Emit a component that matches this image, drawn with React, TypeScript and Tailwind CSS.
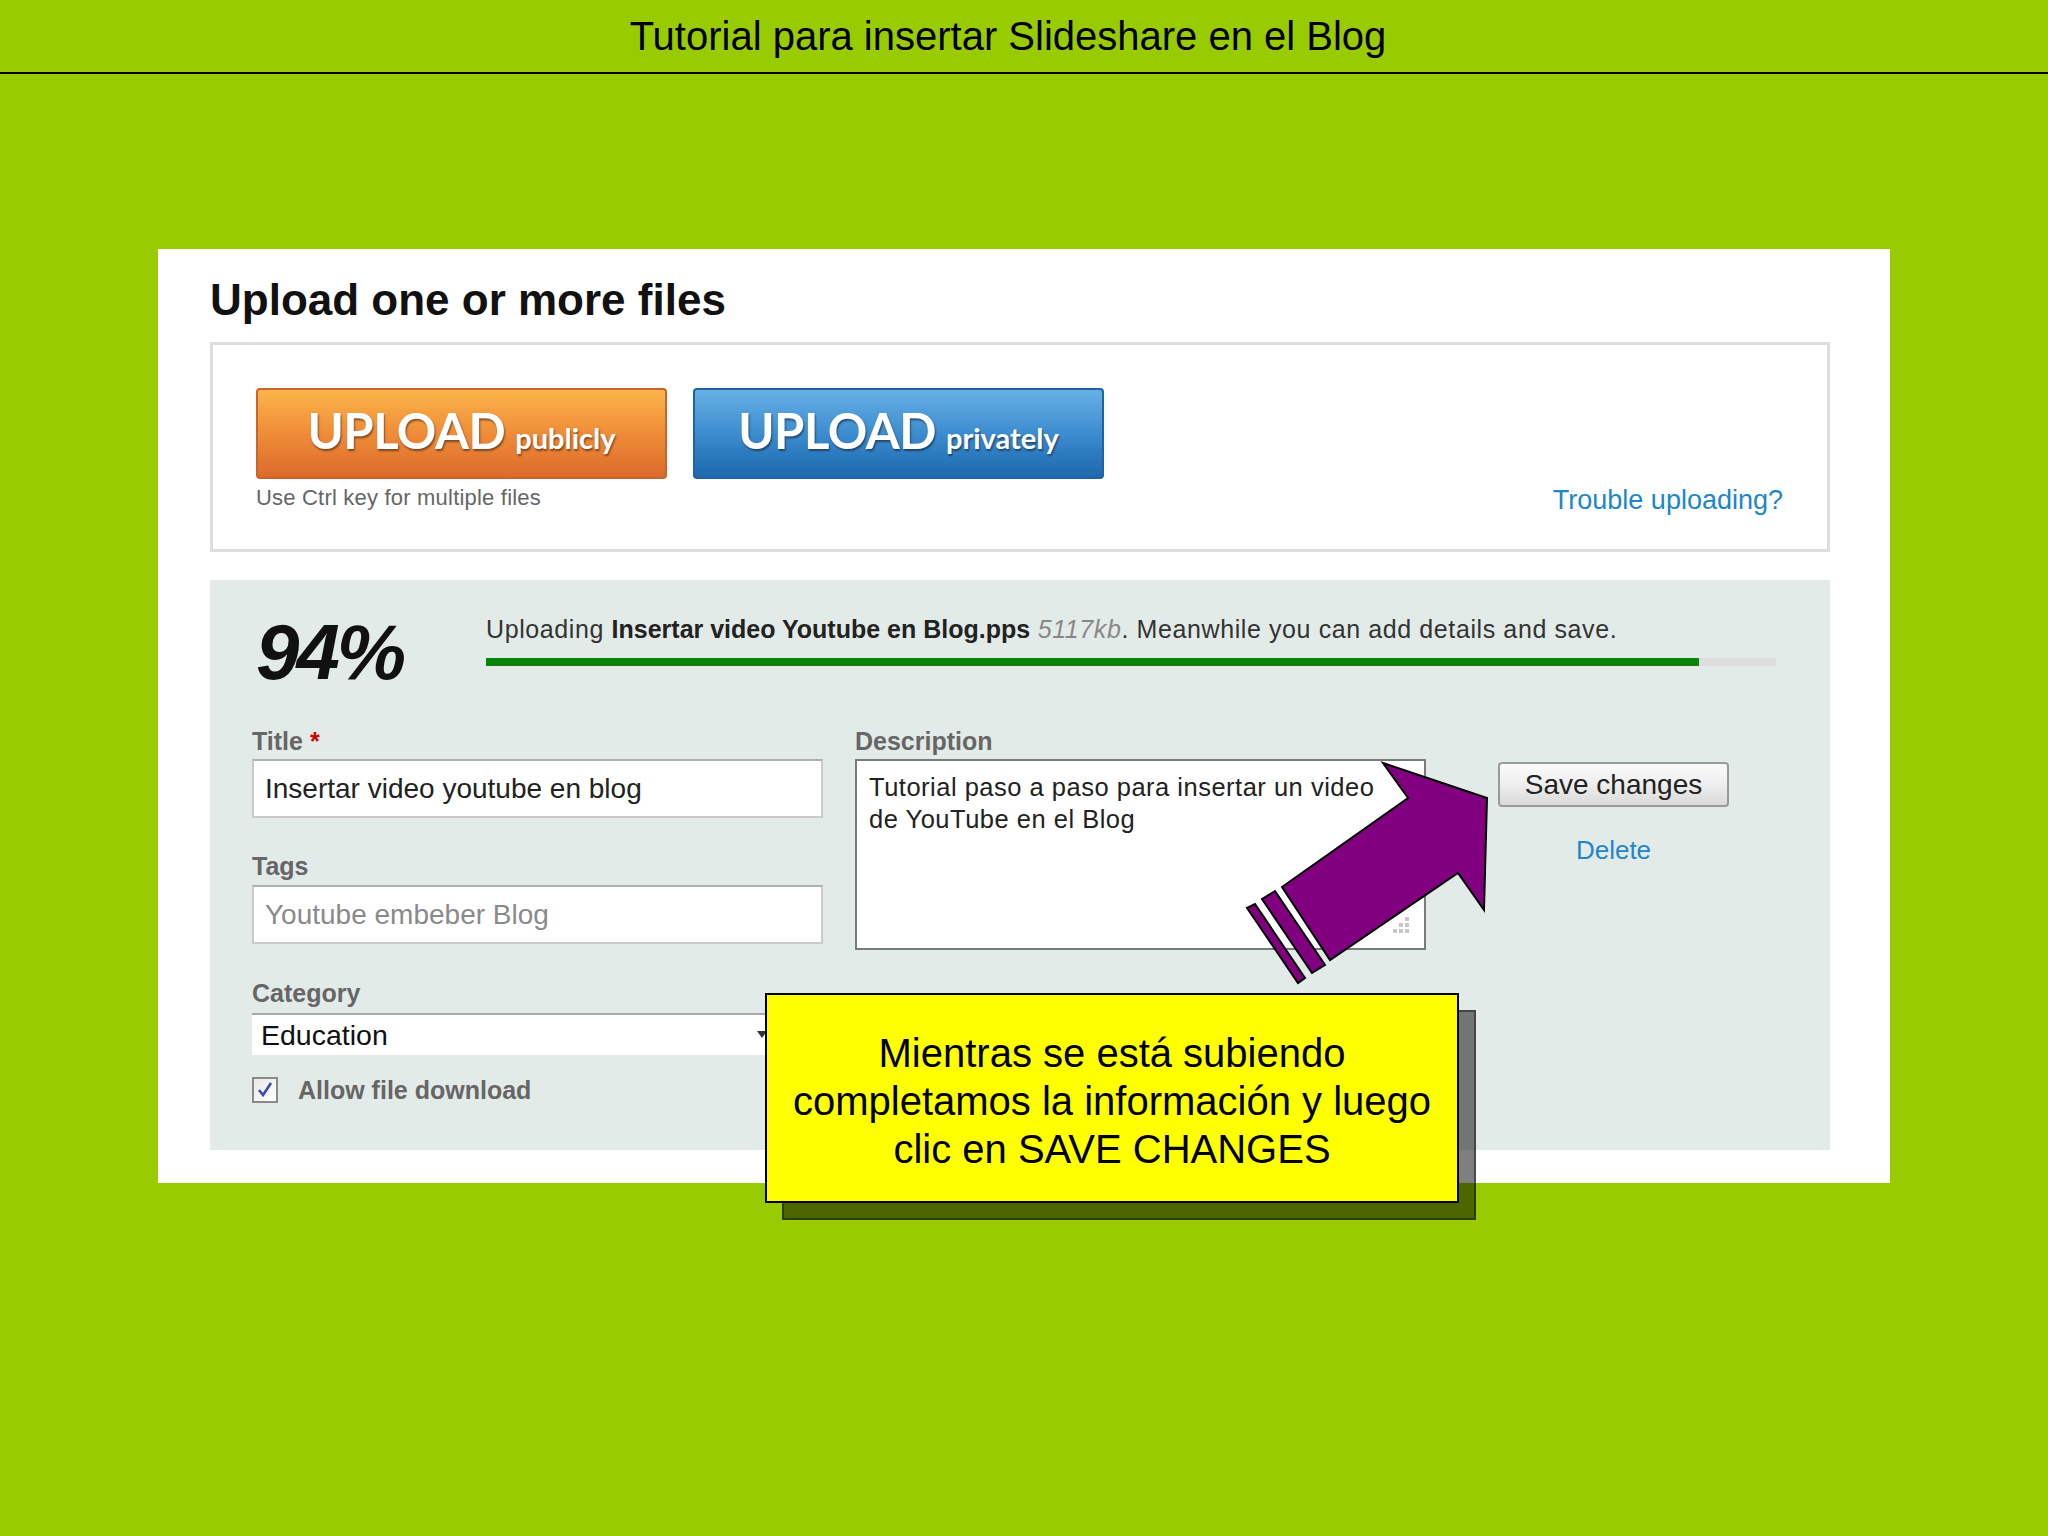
import React from "react";

function UploadButton({ sub, kind }: { sub: string; kind: "orange" | "blue" }) {
  const cls =
    kind === "orange"
      ? "bg-linear-to-b from-[#fbb44a] via-[#ef8c38] to-[#db6a2b] border-[#c7652c]"
      : "bg-linear-to-b from-[#66b0e4] via-[#3c8ccf] to-[#1c69ae] border-[#1e64a4]";
  return (
    <div
      className={`w-[411px] h-[91px] rounded-[4px] border-2 ${cls} flex items-baseline justify-center gap-[10px] pt-[10px] text-white font-['Lato',sans-serif] font-bold [text-shadow:1px_2px_2px_rgba(0,0,0,0.45)]`}
    >
      <span className="text-[49px] leading-[60px] tracking-[-0.5px]">UPLOAD</span>
      <span className="text-[29px] leading-[30px]">{sub}</span>
    </div>
  );
}

export default function App() {
  return (
    <div className="relative w-[2048px] h-[1536px] overflow-hidden bg-[#99cc00] font-['Liberation_Sans',Arial,sans-serif]">
      {/* Header */}
      <div className="h-[74px] border-b-2 border-black flex items-center justify-center pr-[32px] text-[40px] text-black">
        Tutorial para insertar Slideshare en el Blog
      </div>

      {/* White panel */}
      <div className="ml-[158px] mt-[175px] w-[1732px] h-[934px] bg-white pt-[27px] pl-[52px]">
        <div className="text-[44px] font-bold leading-[48px] text-[#111]">Upload one or more files</div>

        {/* Upload box */}
        <div className="mt-[18px] w-[1620px] h-[210px] border-[3px] border-[#dddddd] flex justify-between pl-[43px] pt-[43px] pr-[44px]">
          <div className="flex flex-col">
            <div className="flex gap-[26px]">
              <UploadButton sub="publicly" kind="orange" />
              <UploadButton sub="privately" kind="blue" />
            </div>
            <div className="mt-[7px] text-[22px] leading-[24px] tracking-[0.2px] text-[#666]">Use Ctrl key for multiple files</div>
          </div>
          <div className="mt-[97px] text-[27px] leading-[30px] text-[#1c87c9]">Trouble uploading?</div>
        </div>

        {/* Gray panel */}
        <div className="mt-[28px] w-[1620px] h-[570px] bg-[#e3ebe9] pl-[42px] pr-[54px] pt-[34px]">
          <div className="flex">
            <div className="w-[234px] pl-[4px] text-[78px] leading-[76px] font-bold italic tracking-[-3px] text-[#111]">
              94%
            </div>
            <div className="flex-1">
              <div className="text-[25px] leading-[30px] text-[#333] whitespace-nowrap tracking-[0.6px]">
                Uploading{" "}
                <span className="font-bold text-[#222] tracking-[0px]">Insertar video Youtube en Blog.pps</span>{" "}
                <span className="italic text-[#888]">5117kb</span>. Meanwhile you can add details and save.
              </div>
              <div className="mt-[14px] h-[8px] bg-[#dddddd]">
                <div className="h-full bg-[#0a850a]" style={{ width: "94%" }} />
              </div>
            </div>
          </div>

          <div className="mt-[37px] flex">
            {/* Left column */}
            <div className="w-[571px]">
              <div className="text-[25px] font-bold leading-[28px] text-[#666] mb-[4px]">
                Title <span className="text-[#d40000]">*</span>
              </div>
              <div className="h-[59px] border-2 border-[#cacaca] border-t-[#b0b0b0] bg-white flex items-center px-[11px] text-[28px] text-[#222]">
                Insertar video youtube en blog
              </div>
              <div className="mt-[34px] text-[25px] font-bold leading-[28px] text-[#666] mb-[5px]">Tags</div>
              <div className="h-[59px] border-2 border-[#cacaca] border-t-[#b0b0b0] bg-white flex items-center px-[11px] text-[28px] text-[#8a8a8a]">
                Youtube embeber Blog
              </div>
              <div className="mt-[35px] text-[25px] font-bold leading-[28px] text-[#666] mb-[6px]">Category</div>
              <div className="relative w-[523px] h-[42px] bg-white border-t-2 border-[#a9a9a9] flex items-center pl-[9px] text-[28.5px] text-[#111]">
                Education
                <svg className="absolute right-[8px] top-[16px]" width="10" height="8" viewBox="0 0 10 8">
                  <path d="M0 0 L10 0 L5 7 Z" fill="#333" />
                </svg>
              </div>
              <div className="mt-[21px] flex items-center gap-[20px]">
                <div className="w-[26px] h-[26px] border-2 border-[#8a8a8a] bg-linear-to-br from-[#e8e8e8] to-[#ffffff] flex items-center justify-center">
                  <svg width="18" height="18" viewBox="0 0 18 18">
                    <path d="M3 9 L7 14 L15 2" fill="none" stroke="#3a49b8" strokeWidth="2.6" />
                  </svg>
                </div>
                <div className="text-[25px] font-bold leading-[28px] text-[#666]">Allow file download</div>
              </div>
            </div>

            {/* Middle column */}
            <div className="ml-[32px] w-[571px]">
              <div className="text-[25px] font-bold leading-[28px] text-[#666] mb-[4px]">Description</div>
              <div className="relative h-[191px] border-2 border-[#7a7a7a] bg-white px-[12px] pt-[10px] text-[25.5px] leading-[32px] text-[#222] whitespace-nowrap tracking-[0.5px]">
                Tutorial paso a paso para insertar un video
                <br />
                de YouTube en el Blog
                <svg className="absolute right-[14px] bottom-[14px]" width="20" height="20" viewBox="0 0 20 20">
                  <rect x="15" y="3" width="4" height="4" fill="#c8c8c8" />
                  <rect x="9" y="9" width="4" height="4" fill="#c8c8c8" />
                  <rect x="15" y="9" width="4" height="4" fill="#c8c8c8" />
                  <rect x="3" y="15" width="4" height="4" fill="#c8c8c8" />
                  <rect x="9" y="15" width="4" height="4" fill="#c8c8c8" />
                  <rect x="15" y="15" width="4" height="4" fill="#c8c8c8" />
                </svg>
              </div>
            </div>

            {/* Right column */}
            <div className="ml-[72px] w-[231px] pt-[35px]">
              <div className="h-[45px] rounded-[4px] border-2 border-[#9a9a9a] bg-linear-to-b from-[#fbfbfb] via-[#eeeeee] to-[#d9d9d9] flex items-center justify-center text-[28px] text-[#222]">
                Save changes
              </div>
              <div className="mt-[28px] text-center text-[26px] leading-[30px] text-[#1c87c9]">Delete</div>
            </div>
          </div>
        </div>
      </div>

      {/* Purple arrow */}
      <svg className="absolute left-[1230px] top-[740px]" width="280" height="260" viewBox="0 0 280 260">
        <polygon
          points="52,147 178,58 153,23 257,58 254,170 228,133 100,220"
          fill="#800080"
          stroke="#000"
          strokeWidth="2"
          strokeLinejoin="miter"
        />
        <polygon points="32,159 45,151 95,225 82,233" fill="#800080" stroke="#000" strokeWidth="2" />
        <polygon points="17,168 25,164 75,238 68,243" fill="#800080" stroke="#000" strokeWidth="2" />
      </svg>

      {/* Callout shadow */}
      <div className="absolute left-[782px] top-[1010px] w-[694px] h-[210px] bg-black/50 border-2 border-black/40" />
      {/* Callout */}
      <div className="absolute left-[765px] top-[993px] w-[694px] h-[210px] bg-[#ffff00] border-2 border-black flex flex-col items-center justify-center pt-[6px] text-center text-[40px] leading-[48px] text-black">
        <div>Mientras se está subiendo</div>
        <div>completamos la información y luego</div>
        <div>clic en SAVE CHANGES</div>
      </div>
    </div>
  );
}
